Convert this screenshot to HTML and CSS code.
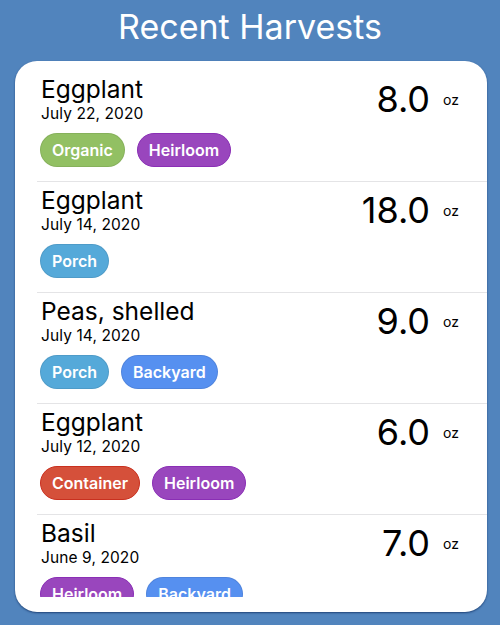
FILE: index.html
```html
<!DOCTYPE html>
<html>
<head>
<meta charset="utf-8">
<link rel="stylesheet" href="styles.css">
</head>
<body>
<div class="screen">
  <h1 class="title">Recent Harvests</h1>
  <div class="card">
    <div class="list">
      <div class="row">
        <div class="info">
          <div class="name">Eggplant</div>
          <div class="date">July 22, 2020</div>
          <div class="tags"><span class="tag organic">Organic</span><span class="tag heirloom">Heirloom</span></div>
        </div>
        <div class="weight"><span class="amount">8.0</span><span class="unit">oz</span></div>
      </div>
      <div class="row">
        <div class="info">
          <div class="name">Eggplant</div>
          <div class="date">July 14, 2020</div>
          <div class="tags"><span class="tag porch">Porch</span></div>
        </div>
        <div class="weight"><span class="amount">18.0</span><span class="unit">oz</span></div>
      </div>
      <div class="row">
        <div class="info">
          <div class="name">Peas, shelled</div>
          <div class="date">July 14, 2020</div>
          <div class="tags"><span class="tag porch">Porch</span><span class="tag backyard">Backyard</span></div>
        </div>
        <div class="weight"><span class="amount">9.0</span><span class="unit">oz</span></div>
      </div>
      <div class="row">
        <div class="info">
          <div class="name">Eggplant</div>
          <div class="date">July 12, 2020</div>
          <div class="tags"><span class="tag container">Container</span><span class="tag heirloom">Heirloom</span></div>
        </div>
        <div class="weight"><span class="amount">6.0</span><span class="unit">oz</span></div>
      </div>
      <div class="row">
        <div class="info">
          <div class="name">Basil</div>
          <div class="date">June 9, 2020</div>
          <div class="tags"><span class="tag heirloom">Heirloom</span><span class="tag backyard">Backyard</span></div>
        </div>
        <div class="weight"><span class="amount">7.0</span><span class="unit">oz</span></div>
      </div>
    </div>
  </div>
</div>
</body>
</html>
```
FILE: styles.css
```css
* { box-sizing: border-box; }
html, body {
  margin: 0;
  padding: 0;
  background: #5184bd;
  font-family: Inter, "Noto Sans", sans-serif;
}
.screen {
  width: 500px;
  height: 625px;
  display: flex;
  flex-direction: column;
  overflow: hidden;
}
.title {
  margin: 0;
  height: 61px;
  padding-top: 6px;
  text-align: center;
  color: #ffffff;
  font-size: 34px;
  font-weight: 400;
  line-height: 42px;
}
.card {
  margin: 0 13px 0 15px;
  height: 551px;
  background: #ffffff;
  border-radius: 22px;
  box-shadow: 0 1px 2px rgba(10, 40, 90, 0.7);
  padding: 10px 0 15px;
  display: flex;
  flex-direction: column;
}
.list {
  flex: 1;
  overflow: hidden;
}
.row {
  display: flex;
  justify-content: space-between;
  align-items: flex-start;
  margin-left: 22px;
  padding: 4px 28px 14px 4px;
  border-bottom: 1px solid #e4e4e6;
}
.name {
  font-size: 24.5px;
  line-height: 29px;
  color: #000;
}
.date {
  font-size: 15.5px;
  line-height: 20px;
  color: #000;
  letter-spacing: 0.1px;
}
.tags {
  display: flex;
  gap: 12px;
  margin-top: 9px;
  margin-left: -1px;
}
.tag {
  height: 34px;
  padding: 0 11px;
  border-radius: 17px;
  color: #fff;
  font-weight: 600;
  font-size: 16px;
  line-height: 32px;
  border: 1px solid rgba(0, 0, 0, 0.08);
}
.organic { background: #92c063; }
.heirloom { background: #9946bd; border-color: #8a2fb5; }
.porch { background: #55a9d9; }
.backyard { background: #5690f0; }
.container { background: #d5503a; border-color: #c9301f; }
.weight {
  display: flex;
  align-items: center;
  gap: 13px;
  padding-top: 3px;
}
.amount {
  font-size: 36px;
  line-height: 43px;
  color: #000;
}
.unit {
  font-size: 14px;
  line-height: 17px;
  color: #000;
}
```
